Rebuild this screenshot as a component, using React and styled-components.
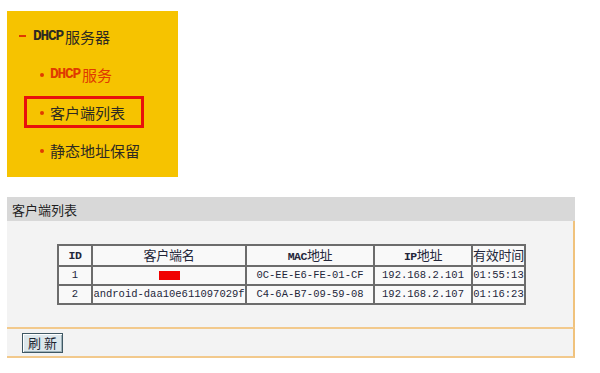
import React from "react";
import styled, { createGlobalStyle } from "styled-components";

const Global = createGlobalStyle`
  html, body { margin: 0; padding: 0; background: #ffffff; }
  body { font-family: "Noto Sans CJK SC", "Liberation Sans", sans-serif; }
`;

const Page = styled.div`
  width: 600px;
  height: 373px;
  box-sizing: border-box;
  padding: 11px 0 0 7px;
  overflow: hidden;
`;

const Menu = styled.div`
  width: 171px;
  height: 166px;
  background: #f6c300;
  box-sizing: border-box;
  padding-top: 6px;
  display: flex;
  flex-direction: column;
`;

const Lat = styled.span`
  font-family: "Liberation Mono", monospace;
  font-size: 14.5px;
  font-weight: bold;
  letter-spacing: -1.2px;
  margin-right: 2px;
`;

const MenuRow = styled.div`
  height: 38px;
  display: flex;
  align-items: center;
  padding-left: ${(p) => p.$indent}px;
`;

const Group = styled.div`
  display: flex;
  align-items: center;
  font-size: 15px;
  color: ${(p) => (p.$active ? "#e03a00" : "#2e2a22")};
  line-height: 1;
`;

const Selected = styled.div`
  width: 120px;
  height: 32px;
  box-sizing: border-box;
  border: 3px solid #e8100c;
  display: flex;
  align-items: center;
  padding-left: 13px;
`;

const Dash = styled.span`
  width: 7px;
  height: 2px;
  background: #e03a00;
  margin-right: 7px;
`;

const Bullet = styled.span`
  width: 4px;
  height: 4px;
  border-radius: 50%;
  background: #e03a00;
  margin-right: 6px;
  margin-top: 1px;
`;

const Section = styled.div`
  margin-top: 20px;
  width: 568px;
`;

const Header = styled.div`
  height: 24px;
  background: #d8d8d8;
  display: flex;
  align-items: center;
  padding-left: 5px;
  font-size: 13px;
  color: #1e1e1e;
`;

const Body = styled.div`
  background: #f3f3f3;
  border-right: 2px solid #f0c27c;
  padding: 23px 0 22px 50px;
`;

const Table = styled.table`
  border-collapse: collapse;
  table-layout: fixed;
  background: #f9f9f9;
  border: 2px solid #6c6c6c;
  color: #23263a;
`;

const Cell = styled.td`
  border: 2px solid #6c6c6c;
  height: 17px;
  padding: 0;
  text-align: center;
  white-space: nowrap;
  overflow: hidden;
  font-family: "Liberation Mono", monospace;
  font-size: 10.5px;
  line-height: 17px;
`;

const HeadCell = styled(Cell).attrs({ as: "th" })`
  font-weight: bold;
  font-size: 11.5px;
  letter-spacing: -0.5px;
`;

const Cjk = styled.span`
  font-family: "Noto Sans CJK SC", sans-serif;
  font-weight: normal;
  font-size: 13px;
  letter-spacing: -0.3px;
`;

const Mask = styled.span`
  display: inline-block;
  width: 21px;
  height: 9px;
  background: #f00000;
  vertical-align: middle;
`;

const Footer = styled.div`
  background: #f3f3f3;
  border-top: 2px solid #f2c98c;
  border-bottom: 2px solid #f2c98c;
  border-right: 2px solid #f0c27c;
  height: 27px;
  display: flex;
  align-items: center;
  padding-left: 15px;
`;

const Button = styled.button`
  width: 41px;
  height: 20px;
  padding: 0;
  background: #dce7ec;
  border: 1px solid #3f5864;
  box-shadow: inset 1px 1px 0 #ffffff, inset -1px -1px 0 #9fb2ba;
  font-family: "Noto Sans CJK SC", sans-serif;
  font-size: 13px;
  color: #1c2430;
  line-height: 18px;
  letter-spacing: 3px;
  text-indent: 3px;
`;

const cols = [34, 154, 128, 98, 53];

const rows = [
  { id: "1", name: null, mac: "0C-EE-E6-FE-01-CF", ip: "192.168.2.101", t: "01:55:13" },
  { id: "2", name: "android-daa10e611097029f", mac: "C4-6A-B7-09-59-08", ip: "192.168.2.107", t: "01:16:23" },
];

export default function App() {
  return (
    <Page>
      <Global />
      <Menu>
        <MenuRow $indent={12}>
          <Group>
            <Dash />
            <Lat>DHCP</Lat>服务器
          </Group>
        </MenuRow>
        <MenuRow $indent={33}>
          <Group $active>
            <Bullet />
            <Lat>DHCP</Lat>服务
          </Group>
        </MenuRow>
        <MenuRow $indent={17}>
          <Selected>
            <Group>
              <Bullet />
              客户端列表
            </Group>
          </Selected>
        </MenuRow>
        <MenuRow $indent={33}>
          <Group>
            <Bullet />
            静态地址保留
          </Group>
        </MenuRow>
      </Menu>

      <Section>
        <Header>客户端列表</Header>
        <Body>
          <Table>
            <colgroup>
              {cols.map((w, i) => (
                <col key={i} style={{ width: w }} />
              ))}
            </colgroup>
            <thead>
              <tr>
                <HeadCell>ID</HeadCell>
                <HeadCell><Cjk>客户端名</Cjk></HeadCell>
                <HeadCell>MAC<Cjk>地址</Cjk></HeadCell>
                <HeadCell>IP<Cjk>地址</Cjk></HeadCell>
                <HeadCell><Cjk>有效时间</Cjk></HeadCell>
              </tr>
            </thead>
            <tbody>
              {rows.map((r) => (
                <tr key={r.id}>
                  <Cell>{r.id}</Cell>
                  <Cell>{r.name ? r.name : <Mask />}</Cell>
                  <Cell>{r.mac}</Cell>
                  <Cell>{r.ip}</Cell>
                  <Cell>{r.t}</Cell>
                </tr>
              ))}
            </tbody>
          </Table>
        </Body>
        <Footer>
          <Button>刷新</Button>
        </Footer>
      </Section>
    </Page>
  );
}
